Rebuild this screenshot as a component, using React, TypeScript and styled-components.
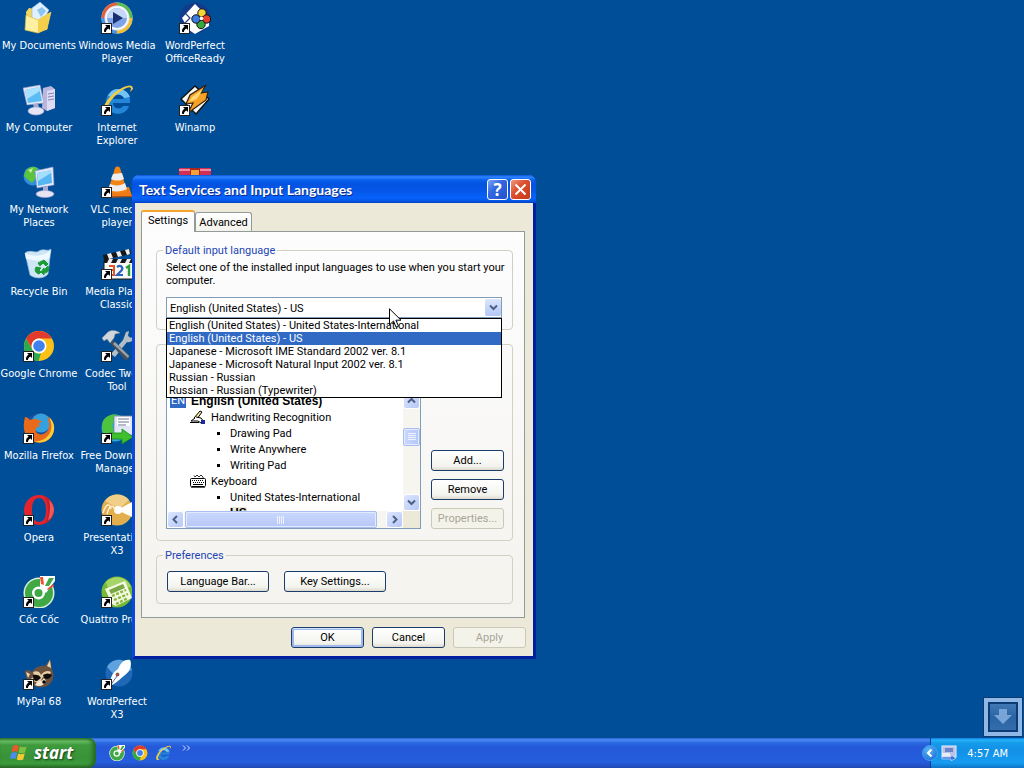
import React, { ReactNode } from "react";
import styled, { createGlobalStyle, css } from "styled-components";

const uiFont = `Roboto, "Liberation Sans", Arial, sans-serif`;
const boldFont = `"Liberation Sans", Arial, sans-serif`;
const shellFont = `"DejaVu Sans Condensed", Tahoma, sans-serif`;
const titleFont = `Lato, "Trebuchet MS", sans-serif`;
const startFont = `"Noto Sans", "Trebuchet MS", sans-serif`;

const GlobalStyle = createGlobalStyle`
  *, *::before, *::after { box-sizing: border-box; }
  html, body, #root { height: 100%; margin: 0; }
  body { font: 11px/13px ${uiFont}; color: #000; }
  button, select { font: inherit; color: inherit; margin: 0; }
  ul { list-style: none; margin: 0; padding: 0; }
  svg { display: block; flex: none; }
`;

/* ---------- desktop ---------- */

const Screen = styled.div`
  display: flex;
  flex-direction: column;
  min-height: 100%;
  background: #004e98;
`;

const Desktop = styled.main`
  position: relative;
  flex: 1;
`;

const IconGrid = styled.ul`
  display: grid;
  grid-template-rows: repeat(9, 82px);
  grid-auto-flow: column;
  grid-auto-columns: 78px;
`;

const DesktopButton = styled.button`
  display: flex;
  flex-direction: column;
  align-items: center;
  gap: 5px;
  width: 100%;
  padding: 2px 0 0;
  border: 0;
  background: none;
  color: #fff;
  font: 11px/13px ${shellFont};
  white-space: pre;
  text-align: center;
`;

const Picture = styled.span`
  display: block;
  position: relative;
`;

const ShortcutMark = styled.svg`
  position: absolute;
  left: 0;
  bottom: 0;
`;

const Shortcut = () => (
  <ShortcutMark width="11" height="11" viewBox="0 0 11 11">
    <rect x="0.5" y="0.5" width="10" height="10" fill="#fff" stroke="#222" />
    <path d="M4 2h5v5L7.400 5.400C5.500 6.500 5 7.500 5 9H3.200C2.500 7 3.500 5 5.600 3.600z" fill="#000" />
  </ShortcutMark>
);

const Art = ({ children, size = 32 }: { children: ReactNode; size?: number }) => (
  <svg width={size} height={size} viewBox="0 0 32 32" aria-hidden="true">{children}</svg>
);

const Documents = () => (
  <Art>
    <path d="M3 10 6 6l6 1 2 3 13 2-3 16-19 1z" fill="#f2d662" />
    <path d="M9 6 17 0l9 8-8 15-9-3z" fill="#dff0ff" stroke="#8fb7e4" strokeWidth=".6" />
    <path d="m14 8 5-3 4 4-5 6z" fill="#8cc3f0" />
    <path d="M3 13l12 5 13-8-4 17-9 4-13-3z" fill="#fdf0a0" stroke="#e0b93c" strokeWidth=".7" />
    <path d="M15 18 28 10l-4 17-9 4z" fill="#f4cf4c" />
  </Art>
);

const Computer = () => (
  <Art>
    <path d="m20 4 8-2 5 4-1 18-8 3-5-3z" fill="#b9b7dc" />
    <path d="m24 7 8-2v19l-8 3z" fill="#dddcf2" />
    <path d="m25 10 6-1M25 13l6-1M25 16l6-1" stroke="#8584b5" />
    <path d="m0 4 17-3 4 18-17 2z" fill="#e7e9f8" stroke="#9698c8" strokeWidth=".6" />
    <path d="m2 6 14-3 3 14-14 2z" fill="#5cbcf4" />
    <path d="m2 6 14-3 1 4L4 15z" fill="#a8e2ff" />
    <path d="m10 20 5-1 1 5h-5z" fill="#a9abd5" />
    <ellipse cx="13" cy="27" rx="8" ry="4" fill="#e5e5f5" stroke="#a4a5d0" strokeWidth=".6" />
  </Art>
);

const Network = () => (
  <Art>
    <circle cx="10" cy="10" r="9.500" fill="#2f8fdc" />
    <path d="M3 4c5-4 9-4 12-1l-4 4 3 4-5 6-5-4-3-3z" fill="#5cc33c" />
    <path d="M5 4l5-2-2 5z" fill="#c5f09a" />
    <path d="m12 5 18-4 1 18-17 3z" fill="#e7e9f8" stroke="#8f95c4" strokeWidth=".6" />
    <path d="m14 7 14-3 1 13-14 3z" fill="#55b7f2" />
    <path d="m14 7 14-3v3L15 15z" fill="#a5defc" />
    <path d="m20 21 5-1v6h-5z" fill="#a9abd5" />
    <ellipse cx="22" cy="28" rx="9" ry="3.500" fill="#e5e3f4" stroke="#a4a5d0" strokeWidth=".6" />
  </Art>
);

const Bin = () => (
  <Art>
    <path d="M2 5c6-4 10 1 14-2 5-3 8 1 12-2l-3 25c-4 5-13 5-18 1z" fill="#cfe6f6" stroke="#8eb8da" strokeWidth=".7" />
    <path d="M2 5c8 4 19 4 26-3l-2 9C18 14 10 12 3 11z" fill="#eefaff" />
    <path d="m15 15 6-3 4 4-2 2-3-3-3 3zM13 19l5 1-2 2 2 2-2 2c-3-1-5-3-3-7zM25 18c2 4 0 7-4 7v2l-3-3 3-4v2z" fill="#1c9c35" stroke="#1c9c35" />
  </Art>
);

const Chrome = ({ size }: { size?: number }) => (
  <Art size={size}>
    <circle cx="16" cy="16" r="15" fill="#fbc116" />
    <path d="M3 8.500A15 15 0 0 1 29 8.500H16a7.500 7.500 0 0 0-6.500 11z" fill="#e23b2e" />
    <path d="M3 8.500 9.500 19.800A7.500 7.500 0 0 0 18 23.200L15.500 31A15 15 0 0 1 3 8.500z" fill="#2da94f" />
    <circle cx="16" cy="16" r="7.500" fill="#fff" />
    <circle cx="16" cy="16" r="5.800" fill="#3f82ee" />
  </Art>
);

const Firefox = () => (
  <Art>
    <circle cx="16.500" cy="15.500" r="14.500" fill="#1b4f9a" />
    <circle cx="18" cy="11" r="9.500" fill="#35a0de" />
    <path d="M2 5c2 0 3 1 5 3 4-2 9-1 12 2-3 0-4 2-2 4-4 1-5 3-4 6 3 4 9 3 12-2 2-5 1-9-1-13 7 3 9 12 5 19-5 8-17 9-24 2C0 20 0 12 2 5z" fill="#ea6a1c" />
    <path d="M26 5c6 5 7 13 2 20-4 5-11 7-17 4 9 1 15-4 17-11 1-5 0-9-2-13z" fill="#fbcd3b" />
  </Art>
);

const Opera = () => (
  <Art>
    <path fillRule="evenodd" d="M16 1a15 15 0 1 1 0 30 15 15 0 0 1 0-30zm0 3c-5 0-7 5-7 12s2 12 7 12 7-5 7-12-2-12-7-12z" fill="#e2242c" />
    <path d="M20 2c7 2 11 8 11 14s-4 12-11 14c4-3 5-8 5-14s-1-11-5-14z" fill="#c4202a" />
    <path d="M26 6c3 3 5 6 5 10-1 5-3 9-6 10 2-6 3-14 1-20z" fill="#ee5b5e" />
  </Art>
);

const CocCoc = ({ size }: { size?: number }) => (
  <Art size={size}>
    <circle cx="16" cy="17" r="15.500" fill="#d9f1d6" />
    <circle cx="16" cy="17" r="14" fill="#41a846" />
    <path d="m17 12 0-12h15v5l-9 12z" fill="#fff" />
    <path d="m18 8-1-7 3 0 1 8zM24 13l6-5 1 2-6 4z" fill="#ee5330" />
    <path d="m22 10 4-8h5l-5 8z" fill="#41a846" />
    <circle cx="15.500" cy="17" r="6.500" fill="#fff" />
    <circle cx="15.500" cy="17" r="4" fill="#41a846" />
  </Art>
);

const Raccoon = () => (
  <Art>
    <path d="M2 13c3-2 5-1 7 1 3-5 8-7 13-6l5-7 2 10c3 7 1 14-5 17-7 3-14 1-16-5-4-1-6-5-6-10z" fill="#6b5240" />
    <path d="m24 8 3-6 1 8zM3 14l4 2-2 4z" fill="#f0d5b0" />
    <path d="M10 14c4-2 7 0 8 3 3-4 7-5 10-3-1 4-5 5-8 5l-3 5c-4 1-8-1-9-4 2 0 4-2 2-6z" fill="#e9cda2" />
    <path d="M10 17c3-1 7 0 8 3l-4 3c-3 0-4-2-4-6zM20 17c3-2 6-2 9 0-2 4-5 5-8 3z" fill="#100d0b" />
    <path d="M14 24c3-1 5-1 7-4l2 3c-2 5-7 6-11 4z" fill="#f3e7d2" />
    <circle cx="21" cy="24" r="1.800" fill="#000" />
  </Art>
);

const MediaPlayer = () => (
  <Art>
    <circle cx="16" cy="16" r="15.500" fill="#dfe8f4" />
    <path d="M16 2a14 14 0 0 0-14 14" stroke="#e3603a" strokeWidth="3" fill="none" />
    <path d="M16 2a14 14 0 0 1 14 14" stroke="#5bbb4e" strokeWidth="3" fill="none" />
    <path d="M30 16a14 14 0 0 1-14 14" stroke="#f5bf32" strokeWidth="3" fill="none" />
    <path d="M16 30A14 14 0 0 1 2 16" stroke="#4d93e0" strokeWidth="3" fill="none" />
    <circle cx="16" cy="16" r="11.500" fill="#f6faff" />
    <circle cx="16" cy="16" r="10" fill="#7fa3e6" />
    <path d="M6 16a10 10 0 0 1 20 0z" fill="#c6d8f8" />
    <path d="m12 10 10 6-10 6z" fill="#17306f" />
  </Art>
);

const Explorer = ({ size }: { size?: number }) => (
  <Art size={size}>
    <path fillRule="evenodd" d="M17 5a12 12 0 0 1 12 14H12c0 6 8 7 10 3h6C25 33 6 33 5 18 5 11 10 5 17 5zm-5 10h11c-1-6-10-6-11 0z" fill="#2486d8" />
    <path d="M17 5c6 0 10 3 12 8l-6 1c-2-4-8-5-11-1l-5-1c2-4 5-7 10-7z" fill="#72c4f4" />
    <path d="M32 5c0-6-8-4-16 2C8 12 0 23 3 29c2 2 5 1 7-1-3 1-4 0-4-3 1-6 7-13 14-18 6-4 10-5 10-2l-1 3z" fill="#f3cb42" />
  </Art>
);

const Cone = () => (
  <Art>
    <path d="m5 23 23-2 3 9-29 1z" fill="#ef7a14" />
    <path d="m2 31 29-1v1l-29 1z" fill="#b94d05" />
    <path d="M14 2c1-2 4-2 5 0l7 23c-5 3-14 3-19 0z" fill="#f28416" />
    <path d="m12 8 9-1 2 6c-4 2-9 2-13 0zM9 18c5 2 11 2 15-1l2 6c-5 3-14 3-19 1z" fill="#eceef0" />
  </Art>
);

const Clapper = () => (
  <Art>
    <rect x="3" y="13" width="29" height="18" fill="#f9f9f6" stroke="#191919" />
    <path d="m2 7 27-6 1 5L3 12z" fill="#181818" />
    <path d="m6 6 4-1 2 5-4 1zM15 4l4-1 2 5-4 1zM24 2l4-1 1 5-3 1z" fill="#eee" />
    <rect x="3" y="11" width="29" height="4" fill="#181818" />
    <path d="m8 11 4 0-2 4H6zM17 11h4l-2 4h-4zM26 11h4l-2 4h-4z" fill="#eee" />
    <path d="M8 18h5v4h-3 3v5H8" stroke="#e0562b" strokeWidth="2" fill="none" />
    <path d="M16 19c4-3 7 1 4 4l-4 4h6" stroke="#2a62c4" strokeWidth="2.200" fill="none" />
    <path d="m25 20 3-2v10" stroke="#2a9c3b" strokeWidth="2.400" fill="none" />
  </Art>
);

const Tools = () => (
  <Art>
    <path d="m22 10 3-8 3-1-1 5 3 2 3-3c0 5-3 8-7 7L14 27l-4-3z" fill="#b4bcc4" />
    <path d="m12 10 17 16-4 5L9 13z" fill="#46505c" />
    <path d="m14 12 14 14-1 2-15-14z" fill="#98a4b0" />
    <path d="m1 8 6-6c5-3 9-1 12 1l-5 1-1 4-4 5-3-4-3 2z" fill="#d0d6dc" stroke="#8b949e" strokeWidth=".5" />
  </Art>
);

const Download = () => (
  <Art>
    <circle cx="14" cy="16" r="13.500" fill="#31a5d8" />
    <path d="M2 9c5-8 14-7 17-5l-8 8 2 8-7 5c-5-4-6-10-4-16z" fill="#4fc23f" />
    <path d="M13 4h19v19H13z" fill="#dfe6f5" stroke="#7686a8" strokeWidth=".8" />
    <path d="M16 5h13v9H16z" fill="#fff" />
    <path d="M17 7h11M17 10h11M17 13h8" stroke="#6a7690" />
    <path d="M8 21h13v-4l11 8-11 7v-5H8z" fill="#3fc02c" stroke="#1b8a1b" strokeWidth=".8" />
  </Art>
);

const Presentations = () => (
  <Art>
    <circle cx="16" cy="16" r="15.500" fill="#e3ae4e" />
    <path d="M4 7A15 15 0 0 1 28 6l-10 9z" fill="#f2cf88" />
    <path d="m16 16 15-8c1 5 1 11 0 15z" fill="#fffdf8" />
    <circle cx="17" cy="16" r="4" fill="#fff" />
    <path d="M2 19c3-10 7-10 8-4M6 20c2-9 7-10 8-3" stroke="#fff1d3" strokeWidth="1.400" fill="none" />
  </Art>
);

const Calculator = () => (
  <Art>
    <circle cx="16" cy="16" r="15.500" fill="#78b935" />
    <path d="M5 6A15 15 0 0 1 30 11L8 15z" fill="#a5d566" />
    <path d="m4 13 20-8 7 17-16 8-4-2z" fill="#f3f8e4" />
    <path d="m8 14 14-6 2 4-14 6z" fill="#79a844" />
    <path d="m11 20 14-6M13 24l14-6M15 28l12-6" stroke="#88b73b" strokeWidth="2.400" strokeDasharray="3 1.500" />
  </Art>
);

const Pen = () => (
  <Art>
    <circle cx="18" cy="15" r="13.500" fill="#1f68b8" />
    <path d="M6 9A13.500 13.500 0 0 1 31 12L14 18z" fill="#5ea3dd" />
    <path d="M9 28c0-8 2-13 8-17 3-7 7-10 12-9 2 3 1 11-5 15-4 3-8 8-15 11z" fill="#fff" />
    <path d="m9 28 7-10" stroke="#2f4d78" strokeWidth=".8" />
    <circle cx="16.500" cy="16.500" r="1.500" fill="#e04c32" stroke="#222" strokeWidth=".6" />
  </Art>
);

const OfficeReady = () => (
  <Art>
    <circle cx="16" cy="16" r="15.500" fill="#113c8c" />
    <path d="m3 16 13-14 14 14v8l-14 8-6-4z" fill="#fff" />
    <path d="m6 11 5 5-5 5" stroke="#2b3c77" strokeWidth="1.200" fill="none" />
    <circle cx="23" cy="11" r="4.200" fill="#f6d636" stroke="#111" />
    <circle cx="27.500" cy="17" r="4.200" fill="#e9402d" stroke="#111" />
    <circle cx="22" cy="22.500" r="4.200" fill="#38a63d" stroke="#111" />
    <circle cx="17" cy="17" r="4.200" fill="#3c7be0" stroke="#111" />
    <circle cx="22.500" cy="16.500" r="1.800" fill="#fff" />
  </Art>
);

const Winamp = () => (
  <Art>
    <path d="M2 15 16 2l14 13-13 15z" fill="#f7f7f4" stroke="#111" strokeWidth="1.400" />
    <path d="m27 1-16 10-4 9 7-1-5 10 18-13 2-8-7 1z" fill="#f6a128" stroke="#33200a" strokeWidth="1.200" />
    <path d="m24 5-11 8-3 5 8-3z" fill="#fdd873" />
  </Art>
);

const Archive = () => (
  <Art>
    <rect x="0" y="2" width="32" height="8" rx="1" fill="#d22f57" />
    <rect x="0" y="3" width="32" height="2" fill="#f08aa0" />
    <rect x="0" y="11" width="32" height="8" fill="#3b6fd0" />
    <rect x="0" y="20" width="32" height="8" fill="#3ba548" />
    <rect x="11" y="2" width="10" height="28" fill="#a8281c" />
    <rect x="12" y="4" width="8" height="5" fill="#f6a23a" />
  </Art>
);

type Entry = { label: string; art: ReactNode; link?: boolean };

const entries: Entry[] = [
  { label: "My Documents", art: <Documents /> },
  { label: "My Computer", art: <Computer /> },
  { label: "My Network\nPlaces", art: <Network /> },
  { label: "Recycle Bin", art: <Bin /> },
  { label: "Google Chrome", art: <Chrome />, link: true },
  { label: "Mozilla Firefox", art: <Firefox />, link: true },
  { label: "Opera", art: <Opera />, link: true },
  { label: "Cốc Cốc", art: <CocCoc />, link: true },
  { label: "MyPal 68", art: <Raccoon />, link: true },
  { label: "Windows Media\nPlayer", art: <MediaPlayer />, link: true },
  { label: "Internet\nExplorer", art: <Explorer />, link: true },
  { label: "VLC media\nplayer", art: <Cone />, link: true },
  { label: "Media Player\nClassic", art: <Clapper />, link: true },
  { label: "Codec Tweak\nTool", art: <Tools />, link: true },
  { label: "Free Download\nManager", art: <Download />, link: true },
  { label: "Presentations\nX3", art: <Presentations />, link: true },
  { label: "Quattro Pro X3", art: <Calculator />, link: true },
  { label: "WordPerfect\nX3", art: <Pen />, link: true },
  { label: "WordPerfect\nOfficeReady", art: <OfficeReady />, link: true },
  { label: "Winamp", art: <Winamp />, link: true },
  { label: "WinRAR", art: <Archive />, link: true },
];

/* ---------- dialog window ---------- */

const Dialog = styled.section`
  position: absolute;
  left: 132px;
  top: 175px;
  width: 404px;
  border: 3px solid;
  border-top: 0;
  border-color: #0831d9 #001ea0 #001ea0 #0a48e0;
  border-radius: 7px 7px 0 0;
  background: #ece9d8;
`;

const TitleBar = styled.header`
  display: flex;
  align-items: center;
  gap: 2px;
  height: 28px;
  margin: 0 -3px;
  padding: 1px 5px 0 7px;
  border-radius: 7px 7px 0 0;
  background: linear-gradient(#0a52d8 0, #2f86ff 2px, #0a5fee 5px, #0453e0 9px, #0557ea 16px, #0763fb 23px, #0455e4 26px, #0341c0 28px);
`;

const Title = styled.h1`
  flex: 1;
  margin: 0;
  color: #fff;
  font: bold 14px/16px ${titleFont};
  text-shadow: 1px 1px #0b2c8c;
  white-space: nowrap;
`;

const CaptionButton = styled.button<{ $close?: boolean }>`
  display: grid;
  place-items: center;
  width: 21px;
  height: 21px;
  padding: 0;
  border: 1px solid #fff;
  border-radius: 3px;
  background: ${(p) =>
    p.$close
      ? "linear-gradient(135deg, #ee9a80, #dd5130 40%, #c23a14)"
      : "linear-gradient(135deg, #7ea6f4, #3367e0 40%, #2152cf)"};
  color: #fff;
  font: bold 17px/18px ${startFont};
`;

const Tabs = styled.div`
  display: flex;
  align-items: flex-end;
  height: 28px;
  padding-left: 6px;
`;

const Tab = styled.button<{ $active?: boolean }>`
  height: ${(p) => (p.$active ? "22px" : "19px")};
  width: ${(p) => (p.$active ? "54px" : "57px")};
  padding: 0;
  border: 1px solid #919b9c;
  border-bottom: 0;
  border-radius: 3px 3px 0 0;
  background: linear-gradient(#fff, #f3f2ea);
  white-space: nowrap;
  ${(p) =>
    p.$active &&
    css`
      position: relative;
      z-index: 1;
      margin-bottom: -1px;
      padding-bottom: 4px;
      border-top: 2px solid #f3a42c;
      background: #fcfcfd;
    `}
`;

const TabPage = styled.div`
  display: flex;
  flex-direction: column;
  gap: 8px;
  margin: 0 8px 0 6px;
  padding: 12px 11px 13px 14px;
  border: 1px solid #919b9c;
  background: linear-gradient(#fdfdfe, #f4f3ee);
`;

const Group = styled.fieldset`
  min-width: 0;
  margin: 0;
  padding: 4px 8px 11px 9px;
  border: 1px solid #d0d0c4;
  border-radius: 4px;
`;

const ServicesGroup = styled(Group)`
  margin-top: 6px;
  padding-top: 46px;
`;

const Legend = styled.legend`
  margin-left: -3px;
  padding: 0 2px;
  color: #1d46b4;
`;

const ComboLabel = styled.label`
  display: block;
  margin-bottom: 10px;
  white-space: pre;
`;

const Combo = styled.div`
  position: relative;
  margin-right: 2px;
`;

const ComboSelect = styled.select`
  display: block;
  appearance: none;
  width: 100%;
  height: 21px;
  padding: 1px 20px 0 3px;
  border: 1px solid #7f9db9;
  border-radius: 0;
  background: #fff;
`;

const ComboArrow = styled.span`
  position: absolute;
  top: 2px;
  right: 1px;
  display: grid;
  place-items: center;
  width: 16px;
  height: 17px;
  border-radius: 2px;
  background: linear-gradient(#dbe5fd, #b3c8f5);
  pointer-events: none;
`;

const Options = styled.ul`
  position: absolute;
  z-index: 2;
  top: 21px;
  left: 0;
  right: 0;
  border: 1px solid #000;
  background: #fff;
`;

const Option = styled.li<{ $chosen: boolean }>`
  height: 13px;
  padding: 1px 0 0 2px;
  background: ${(p) => (p.$chosen ? "#316ac5" : "#fff")};
  color: ${(p) => (p.$chosen ? "#fff" : "#000")};
  line-height: 12px;
  white-space: nowrap;
`;

const Pointer = styled.svg`
  position: absolute;
  z-index: 3;
  left: 223px;
  top: 11px;
`;

const Services = styled.div`
  display: flex;
  align-items: flex-end;
  gap: 10px;
`;

const TreeBox = styled.div`
  display: grid;
  flex: 1;
  grid-template-columns: 1fr 17px;
  grid-template-rows: 119px 17px;
  height: 138px;
  border: 1px solid #7f9db9;
  background: #fff;
`;

const Tree = styled.ul`
  overflow: hidden;
  padding-top: 1px;
`;

const Node = styled.li<{ $level: number; $bold?: boolean }>`
  display: flex;
  align-items: center;
  gap: 5px;
  height: 16px;
  padding-left: ${(p) => [3, 23, 50][p.$level]}px;
  font: ${(p) => (p.$bold ? `bold 12px/13px ${boldFont}` : `11px/13px ${uiFont}`)};
  white-space: nowrap;
`;

const Badge = styled.span`
  width: 16px;
  background: #316ac5;
  color: #fff;
  font: 11px/14px ${uiFont};
  text-align: center;
`;

const Dot = styled.span`
  width: 3px;
  height: 3px;
  margin-right: 5px;
  background: #000;
`;

const Chosen = styled.span`
  background: #ece9d8;
`;

const Bar = styled.div<{ $row?: boolean }>`
  display: flex;
  flex-direction: ${(p) => (p.$row ? "row" : "column")};
  background: #f6f5f0;
`;

const BarButton = styled.button`
  display: grid;
  place-items: center;
  width: 17px;
  height: 17px;
  padding: 0;
  border: 1px solid #fff;
  border-radius: 3px;
  background: linear-gradient(135deg, #dce6fe, #b6c8f6);
`;

const Track = styled.div<{ $row?: boolean }>`
  display: flex;
  flex: 1;
  flex-direction: ${(p) => (p.$row ? "row" : "column")};
  padding: ${(p) => (p.$row ? "0 9px 0 1px" : "19px 0 0")};
`;

const Thumb = styled.div<{ $row?: boolean }>`
  display: grid;
  place-items: center;
  flex: ${(p) => (p.$row ? "1" : "none")};
  height: ${(p) => (p.$row ? "auto" : "18px")};
  border: 1px solid #a9bdf0;
  border-radius: 2px;
  box-shadow: inset 0 0 0 1px #e2eafe;
  background: ${(p) => (p.$row ? "linear-gradient(#cad8fd, #b5c7f6)" : "linear-gradient(90deg, #cad8fd, #b5c7f6)")};
`;

const Corner = styled.div`
  background: #ece9d8;
`;

const ButtonColumn = styled.div`
  display: flex;
  flex-direction: column;
  gap: 8px;
`;

const ButtonRow = styled.div`
  display: flex;
  gap: 8px;
`;

const PreferenceButtons = styled(ButtonRow)`
  gap: 15px;
  padding: 5px 0 0 1px;
`;

const Footer = styled(ButtonRow)`
  justify-content: flex-end;
  padding: 9px 7px 8px;
`;

const PushButton = styled.button<{ $wide?: boolean; $primary?: boolean }>`
  width: ${(p) => (p.$wide ? "102px" : "73px")};
  height: 21px;
  padding: 0;
  border: 1px solid #1c3d6c;
  border-radius: 3px;
  background: linear-gradient(#fff, #f3f3ee 80%, #dcd9cd);
  box-shadow: ${(p) => (p.$primary ? "inset 0 1px #cee7ff, inset 0 0 0 2px #9db9ee" : "none")};
  white-space: nowrap;
  &:disabled {
    border-color: #cbc8b8;
    background: #f4f3ea;
    color: #a8a697;
  }
`;

const Arrow = ({ dir }: { dir: "up" | "down" | "left" | "right" }) => {
  const d = {
    up: "M1 6.500 4.500 3 8 6.500",
    down: "M1 2.500 4.500 6 8 2.500",
    left: "M6 1 2.500 4.500 6 8",
    right: "M3 1 6.500 4.500 3 8",
  }[dir];
  return (
    <svg width="9" height="9" viewBox="0 0 9 9" aria-hidden="true">
      <path d={d} fill="none" stroke="#4d6185" strokeWidth="2" />
    </svg>
  );
};

const HandIcon = () => (
  <svg width="16" height="16" viewBox="0 0 16 16" aria-hidden="true">
    <path d="M4 9 10 2l2 1-5 7z" fill="#f4ec9c" stroke="#000" />
    <path d="m6 8 5 1 3 4-3 1-3-2H1l4-3" fill="#fff" stroke="#000" />
    <path d="M0 13.500h9" stroke="#000" />
    <rect x="11" y="11" width="4" height="4" fill="#1c2a9c" />
  </svg>
);

const KeyboardIcon = () => (
  <svg width="16" height="16" viewBox="0 0 16 16" aria-hidden="true">
    <path d="M4 2.500 5 4l2-2 2 2 2-2 2 2v2" stroke="#000" fill="none" strokeWidth=".8" />
    <rect x="0.500" y="5.500" width="15" height="8" rx="1" fill="#fff" stroke="#000" />
    <path d="M2 7.500h12M3 9.500h11" stroke="#000" strokeDasharray="1 1" />
    <path d="M3 11.500h10" stroke="#000" />
    <path d="M1 14.500h14" stroke="#555" />
  </svg>
);

const languages = [
  "English (United States) - United States-International",
  "English (United States) - US",
  "Japanese - Microsoft IME Standard 2002 ver. 8.1",
  "Japanese - Microsoft Natural Input 2002 ver. 8.1",
  "Russian - Russian",
  "Russian - Russian (Typewriter)",
];
const current = languages[1];

const LanguageDialog = () => (
  <Dialog role="dialog" aria-labelledby="dialog-title">
    <TitleBar>
      <Title id="dialog-title">Text Services and Input Languages</Title>
      <CaptionButton aria-label="Help">?</CaptionButton>
      <CaptionButton $close aria-label="Close">
        <svg width="13" height="13" viewBox="0 0 13 13">
          <path d="m1.500 1.500 10 10M11.500 1.500l-10 10" stroke="#fff" strokeWidth="2" />
        </svg>
      </CaptionButton>
    </TitleBar>
    <Tabs role="tablist">
      <Tab role="tab" aria-selected="true" $active>Settings</Tab>
      <Tab role="tab" aria-selected="false">Advanced</Tab>
    </Tabs>
    <TabPage role="tabpanel">
      <Group>
        <Legend>Default input language</Legend>
        <ComboLabel htmlFor="language">
          {"Select one of the installed input languages to use when you start your\ncomputer."}
        </ComboLabel>
        <Combo>
          <ComboSelect id="language" defaultValue={current}>
            {languages.map((l) => <option key={l}>{l}</option>)}
          </ComboSelect>
          <ComboArrow><Arrow dir="down" /></ComboArrow>
          <Options role="listbox">
            {languages.map((l) => (
              <Option key={l} role="option" aria-selected={l === current} $chosen={l === current}>{l}</Option>
            ))}
          </Options>
          <Pointer width="13" height="21" viewBox="0 0 13 21" aria-hidden="true">
            <path d="M.5.800v16l4-3.800 2.600 6.200 2.400-1-2.600-6H12z" fill="#fff" stroke="#000" />
          </Pointer>
        </Combo>
      </Group>
      <ServicesGroup aria-label="Installed services">
        <Services>
          <TreeBox>
            <Tree>
              <Node $level={0} $bold><Badge>EN</Badge>English (United States)</Node>
              <Node $level={1}><HandIcon />Handwriting Recognition</Node>
              <Node $level={2}><Dot />Drawing Pad</Node>
              <Node $level={2}><Dot />Write Anywhere</Node>
              <Node $level={2}><Dot />Writing Pad</Node>
              <Node $level={1}><KeyboardIcon />Keyboard</Node>
              <Node $level={2}><Dot />United States-International</Node>
              <Node $level={2} $bold><Dot /><Chosen>US</Chosen></Node>
            </Tree>
            <Bar>
              <BarButton aria-label="Scroll up"><Arrow dir="up" /></BarButton>
              <Track>
                <Thumb>
                  <svg width="8" height="8" viewBox="0 0 8 8"><path d="M0 .5h8M0 2.500h8M0 4.500h8M0 6.500h8" stroke="#eef3ff" /></svg>
                </Thumb>
              </Track>
              <BarButton aria-label="Scroll down"><Arrow dir="down" /></BarButton>
            </Bar>
            <Bar $row>
              <BarButton aria-label="Scroll left"><Arrow dir="left" /></BarButton>
              <Track $row>
                <Thumb $row>
                  <svg width="8" height="8" viewBox="0 0 8 8"><path d="M.5 0v8M2.500 0v8M4.500 0v8M6.500 0v8" stroke="#eef3ff" /></svg>
                </Thumb>
              </Track>
              <BarButton aria-label="Scroll right"><Arrow dir="right" /></BarButton>
            </Bar>
            <Corner />
          </TreeBox>
          <ButtonColumn>
            <PushButton>Add...</PushButton>
            <PushButton>Remove</PushButton>
            <PushButton disabled>Properties...</PushButton>
          </ButtonColumn>
        </Services>
      </ServicesGroup>
      <Group>
        <Legend>Preferences</Legend>
        <PreferenceButtons>
          <PushButton $wide>Language Bar...</PushButton>
          <PushButton $wide>Key Settings...</PushButton>
        </PreferenceButtons>
      </Group>
    </TabPage>
    <Footer>
      <PushButton $primary>OK</PushButton>
      <PushButton>Cancel</PushButton>
      <PushButton disabled>Apply</PushButton>
    </Footer>
  </Dialog>
);

/* ---------- desktop extras and task bar ---------- */

const DropTarget = styled.button`
  position: absolute;
  right: 1px;
  bottom: 1px;
  display: grid;
  place-items: center;
  width: 40px;
  height: 40px;
  padding: 0;
  border: 1px solid #0c3a70;
  background: linear-gradient(#4a82bc, #2a64a4 50%, #3a72b0);
  box-shadow: inset 0 0 0 4px #8fb8e6, inset 0 0 0 6px #0d3c74;
`;

const TaskBar = styled.footer`
  display: flex;
  height: 30px;
  background: linear-gradient(#2a62d4 0, #4a8cf4 2px, #2a66e2 5px, #2459d8 9px, #255ddd 24px, #1e49b4 30px);
`;

const Start = styled.button`
  display: flex;
  align-items: center;
  gap: 6px;
  width: 96px;
  padding: 0 0 0 10px;
  border: 0;
  border-radius: 0 8px 8px 0;
  background: linear-gradient(#2f7a2f 0, #6cbf66 3px, #3f9a3d 7px, #389238 20px, #3c9c3c 26px, #2a6a2a 30px);
  box-shadow: inset -3px 0 4px #236623;
  color: #fff;
  font: italic bold 17px/22px ${startFont};
  text-shadow: 1px 1px 2px #143c14;
`;

const QuickLaunch = styled.nav`
  display: flex;
  flex: 1;
  align-items: center;
  gap: 7px;
  padding-left: 13px;
`;

const QuickButton = styled.button`
  padding: 0;
  border: 0;
  background: none;
`;

const More = styled(QuickButton)`
  align-self: flex-start;
  margin: 7px 0 0 4px;
`;

const Tray = styled.div`
  display: flex;
  align-items: center;
  gap: 10px;
  padding-right: 16px;
  border-left: 1px solid #0b3c9c;
  background: linear-gradient(#0c7ade 0, #27b4f8 2px, #159bea 5px, #1290e6 12px, #159cf0 25px, #0e72c4 30px);
  color: #fff;
  font: 11px/13px ${shellFont};
`;

const TrayToggle = styled.button`
  display: grid;
  place-items: center;
  width: 16px;
  height: 16px;
  margin: 0 -7px 0 -9px;
  padding: 0;
  border: 1px solid #3fa4f0;
  border-radius: 50%;
  background: radial-gradient(circle at 40% 30%, #5cb8f8, #1460d0);
`;

const App = () => (
  <Screen>
    <GlobalStyle />
    <Desktop>
      <IconGrid>
        {entries.map((e) => (
          <li key={e.label}>
            <DesktopButton>
              <Picture>{e.art}{e.link && <Shortcut />}</Picture>
              {e.label}
            </DesktopButton>
          </li>
        ))}
      </IconGrid>
      <LanguageDialog />
      <DropTarget aria-label="Drop target">
        <svg width="18" height="16" viewBox="0 0 18 16"><path d="M5 0h8v6h5l-9 9-9-9h5z" fill="#79a5d6" /></svg>
      </DropTarget>
    </Desktop>
    <TaskBar>
      <Start>
        <svg width="18" height="18" viewBox="0 0 18 18" aria-hidden="true">
          <path d="M3 2c2-1.500 4-1 6 0L7.500 8C5.500 7 3.500 7 1.500 8z" fill="#e8582c" />
          <path d="M10 2.500c2 1 4 1 6.500 0L15 8.500c-2 1-4 1-6.500 0z" fill="#7cc242" />
          <path d="M1.200 9c2-1 4-1 6 0L5.700 15c-2-1-4-1-6 0z" fill="#4a8cf0" />
          <path d="M8.200 9.500c2 1 4 1 6.500 0l-1.500 6c-2 1-4 1-6.500 0z" fill="#f8c832" />
        </svg>
        start
      </Start>
      <QuickLaunch>
        <QuickButton aria-label="Cốc Cốc"><CocCoc size={16} /></QuickButton>
        <QuickButton aria-label="Google Chrome"><Chrome size={16} /></QuickButton>
        <QuickButton aria-label="Internet Explorer"><Explorer size={16} /></QuickButton>
        <More aria-label="More">
          <svg width="9" height="6" viewBox="0 0 9 6"><path d="m1 .5 2.500 2.500L1 5.500M5 .5 7.500 3 5 5.500" stroke="#cfe0ff" fill="none" /></svg>
        </More>
      </QuickLaunch>
      <Tray>
        <TrayToggle aria-label="Show hidden icons">
          <svg width="8" height="8" viewBox="0 0 8 8"><path d="M5.500.500 2 4l3.500 3.500" stroke="#fff" strokeWidth="2" fill="none" /></svg>
        </TrayToggle>
        <svg width="16" height="16" viewBox="0 0 16 16" aria-hidden="true">
          <rect x="1" y="1" width="14" height="11" fill="#b9c3e8" stroke="#e8ecfb" />
          <path d="M4 3h8v4H4z" fill="#6f84c8" />
          <path d="M1 8h8v3H1z" fill="#e9edfb" />
          <path d="M1 12h9v-2l5 3-5 3v-2H1z" fill="#3c74d8" stroke="#dfe8fb" strokeWidth=".6" />
        </svg>
        <time>4:57 AM</time>
      </Tray>
    </TaskBar>
  </Screen>
);

export default App;
